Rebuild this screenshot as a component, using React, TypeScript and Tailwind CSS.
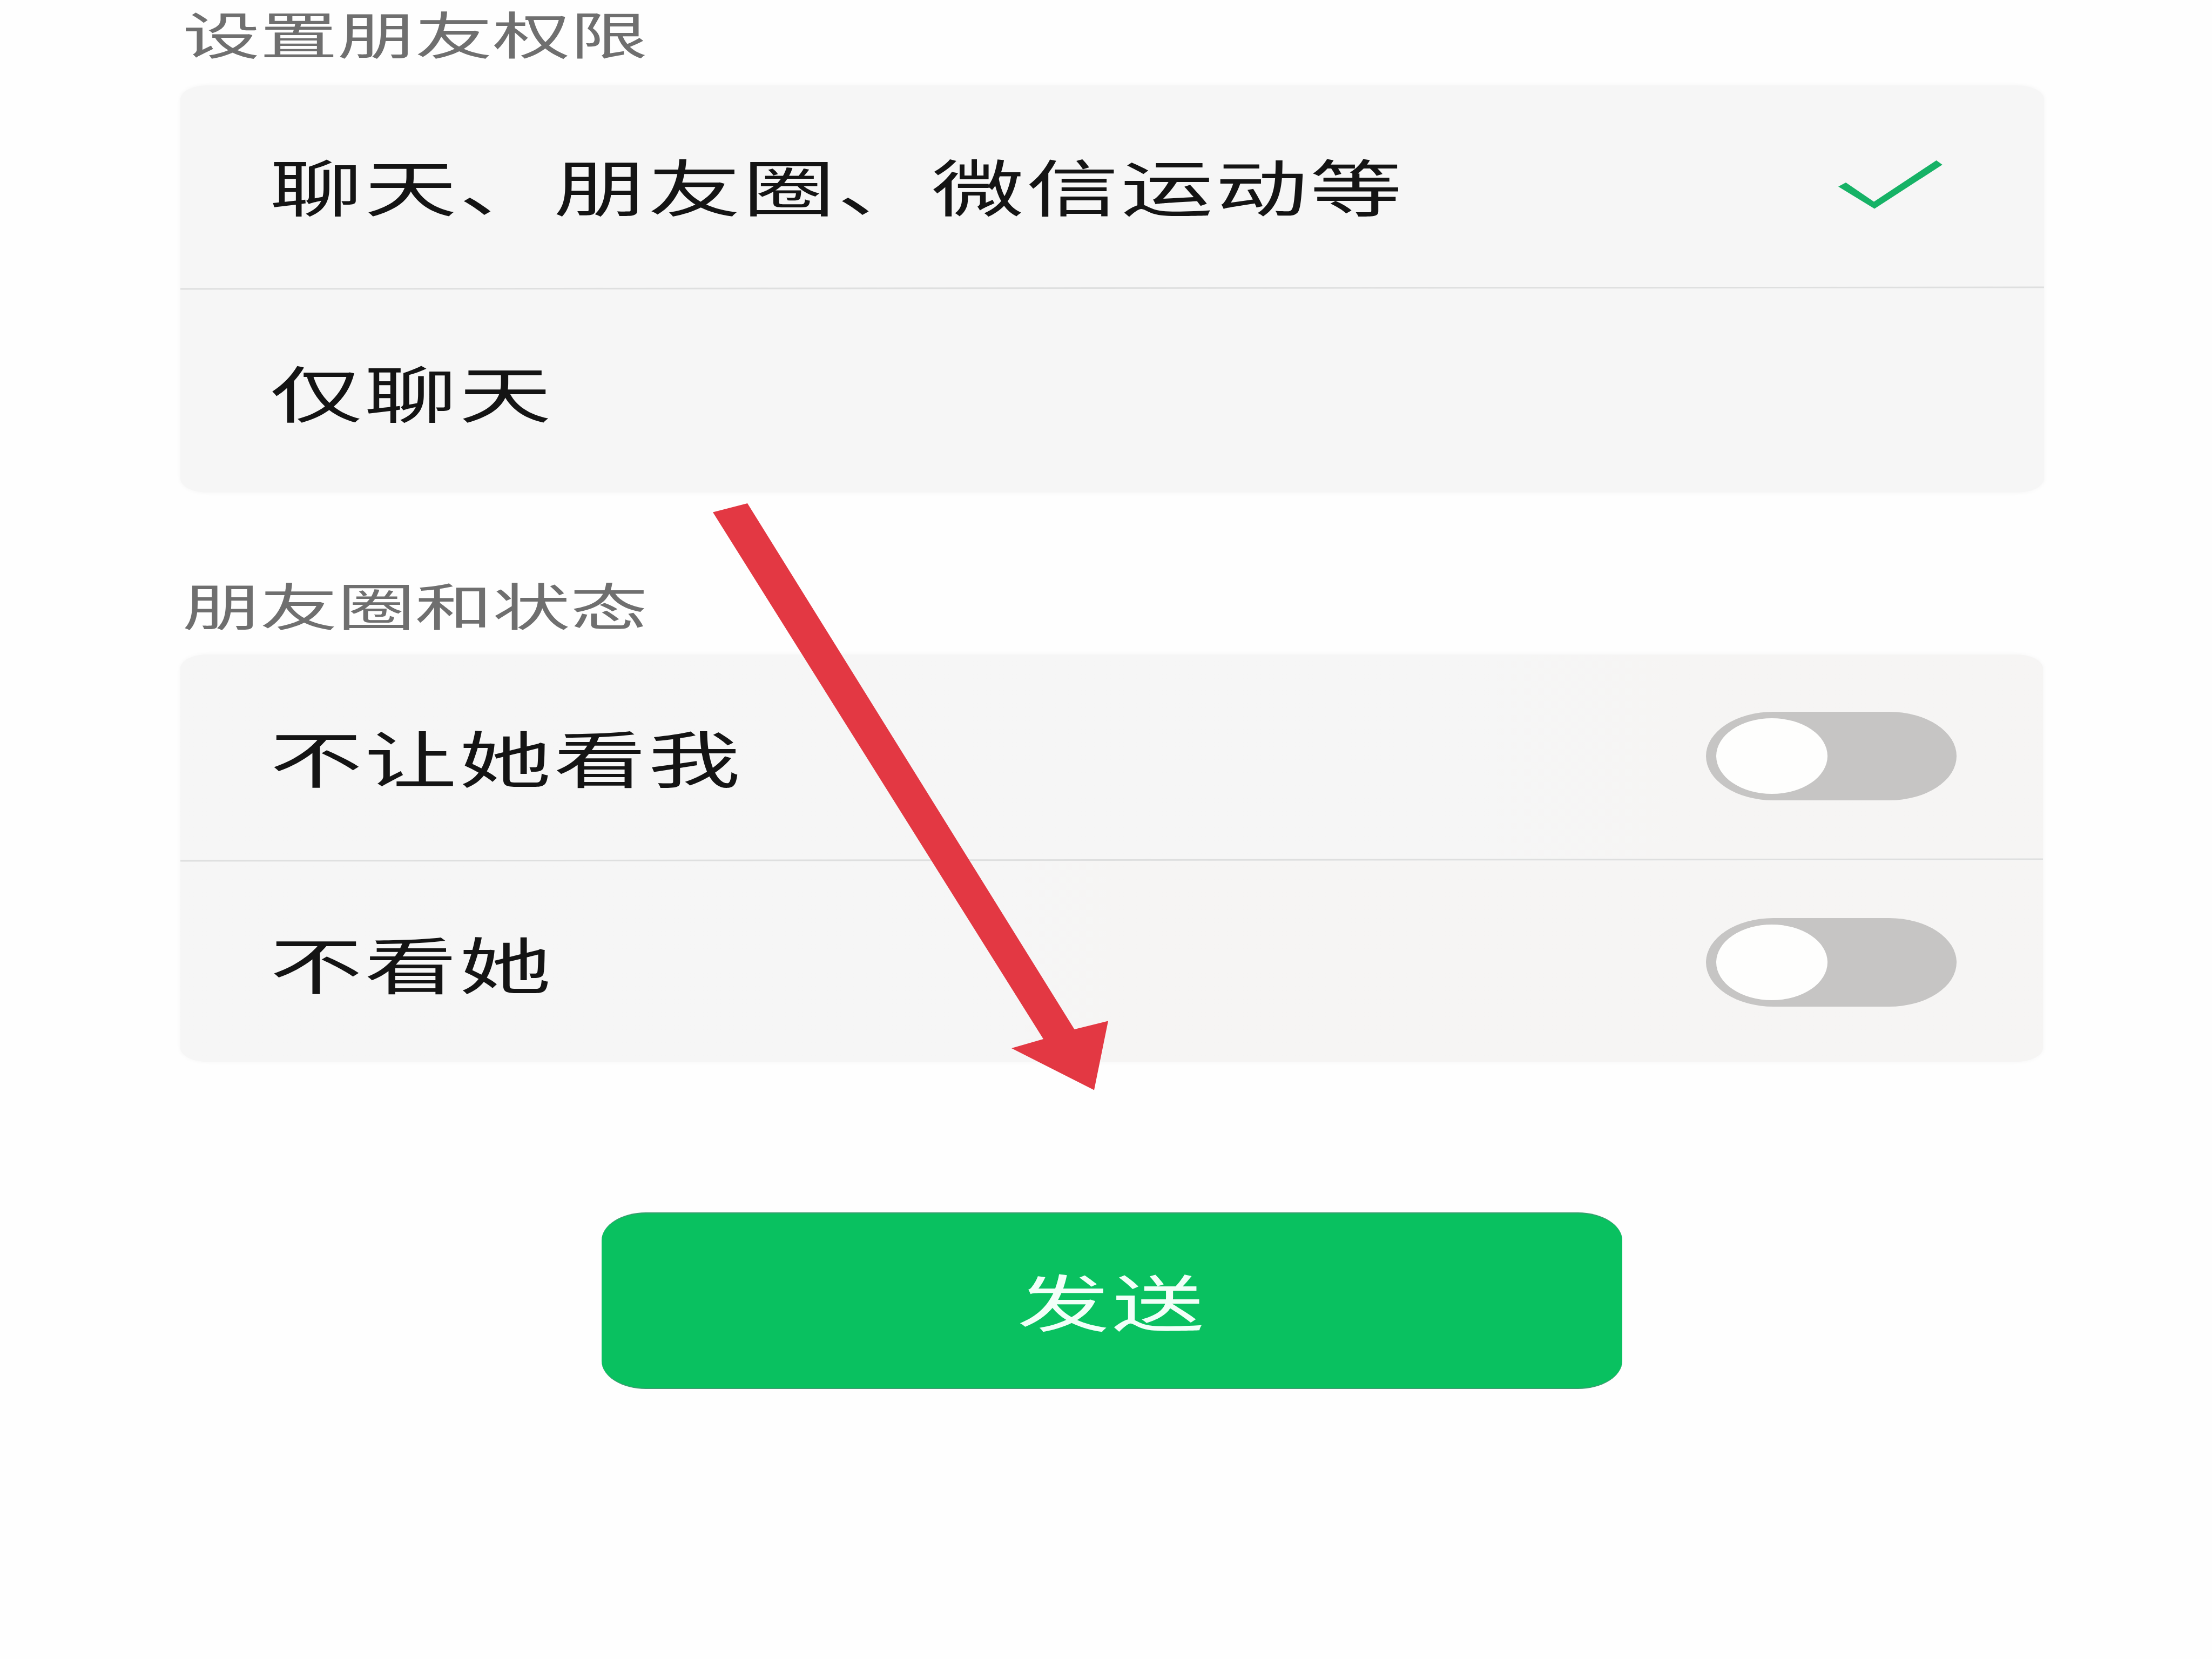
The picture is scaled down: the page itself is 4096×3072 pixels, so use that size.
import type { ReactNode } from "react";

function Heading({ children }: { children: ReactNode }) {
  return (
    <h2 className="flex h-[130px] origin-left scale-x-[1.527] items-center self-start whitespace-nowrap pt-[7px] font-['Liberation_Sans','Noto_Sans_CJK_SC',sans-serif] text-[94px] leading-none text-[#6f6f6f]">
      {children}
    </h2>
  );
}

function Row({ label, children }: { label: string; children?: ReactNode }) {
  return (
    <div className="flex flex-1 items-center justify-between pl-[166px]">
      <span className="origin-left scale-x-[1.5] whitespace-nowrap text-[114px] leading-none tracking-[2.7px] text-[#141414]">
        {label}
      </span>
      {children}
    </div>
  );
}

function Divider() {
  return <div className="h-[3px] shrink-0 rotate-[-0.05deg] bg-[#dedfdf]" />;
}

function Check() {
  return (
    <svg className="mr-[188px] h-[90px] w-[193px]" viewBox="0 0 193 90" aria-hidden="true">
      <path d="M14 41L66 76.500L181.600 0L192.700 8L67 89.500L0 48.500Z" fill="#16b266" />
    </svg>
  );
}

function Toggle() {
  return (
    <button
      role="switch"
      aria-checked="false"
      className="mr-[160px] flex h-[164px] w-[464px] items-center rounded-[125px/82px] bg-[#c6c5c4] pl-[19px]"
    >
      <span className="h-[140px] w-[206px] rounded-[50%] bg-[#fefefd]" />
    </button>
  );
}

export default function App() {
  return (
    <main className="relative flex h-[3072px] w-[4096px] flex-col overflow-hidden bg-[#fefefe] pl-[334px] font-['Noto_Sans_CJK_SC',sans-serif]">
      <div className="ml-[4px] flex flex-col">
        <Heading>设置朋友权限</Heading>
      </div>
      <section className="mt-[28px] flex h-[754px] w-[3451px] flex-col rounded-[50px/26px] bg-[#f6f6f6] shadow-[0_0_8px_#f6f6f6]">
        <div className="flex h-[374px] pb-[7px]">
          <Row label="聊天、朋友圈、微信运动等">
            <Check />
          </Row>
        </div>
        <Divider />
        <div className="flex h-[377px]">
          <Row label="仅聊天" />
        </div>
      </section>
      <div className="ml-[4px] mt-[146px] flex flex-col">
        <Heading>朋友圈和状态</Heading>
      </div>
      <section className="mt-[24px] flex h-[754px] w-[3449px] flex-col overflow-hidden rounded-[50px/26px] bg-[#f6f6f6] shadow-[0_0_8px_#f6f6f6]">
        <div className="flex h-[379px] bg-linear-to-r from-[#f6f6f6] from-70% to-[#f6f5f4] to-80% pb-[3px]">
          <Row label="不让她看我">
            <Toggle />
          </Row>
        </div>
        <Divider />
        <div className="flex h-[372px] bg-linear-to-r from-[#f6f6f6] from-45% to-[#f6f5f4] to-50% pt-[3px]">
          <Row label="不看她">
            <Toggle />
          </Row>
        </div>
      </section>
      <button className="ml-[780px] mt-[279px] flex h-[327px] w-[1890px] items-center justify-center rounded-[82px/52px] border-y-[2px] border-[#3c9c70] bg-[#09c160] pb-[4px]">
        <span className="scale-x-[1.5] text-[114px] leading-none tracking-[2.7px] text-[#f2fff8]">发送</span>
      </button>
      <svg
        className="pointer-events-none absolute left-[1320px] top-[932px] h-[1087px] w-[733px]"
        viewBox="0 0 733 1087"
        aria-hidden="true"
      >
        <path d="M0 16.500L64 0L669.500 974L732 958.500L706 1086.500L553 1009L612 992Z" fill="#e33843" />
      </svg>
    </main>
  );
}
